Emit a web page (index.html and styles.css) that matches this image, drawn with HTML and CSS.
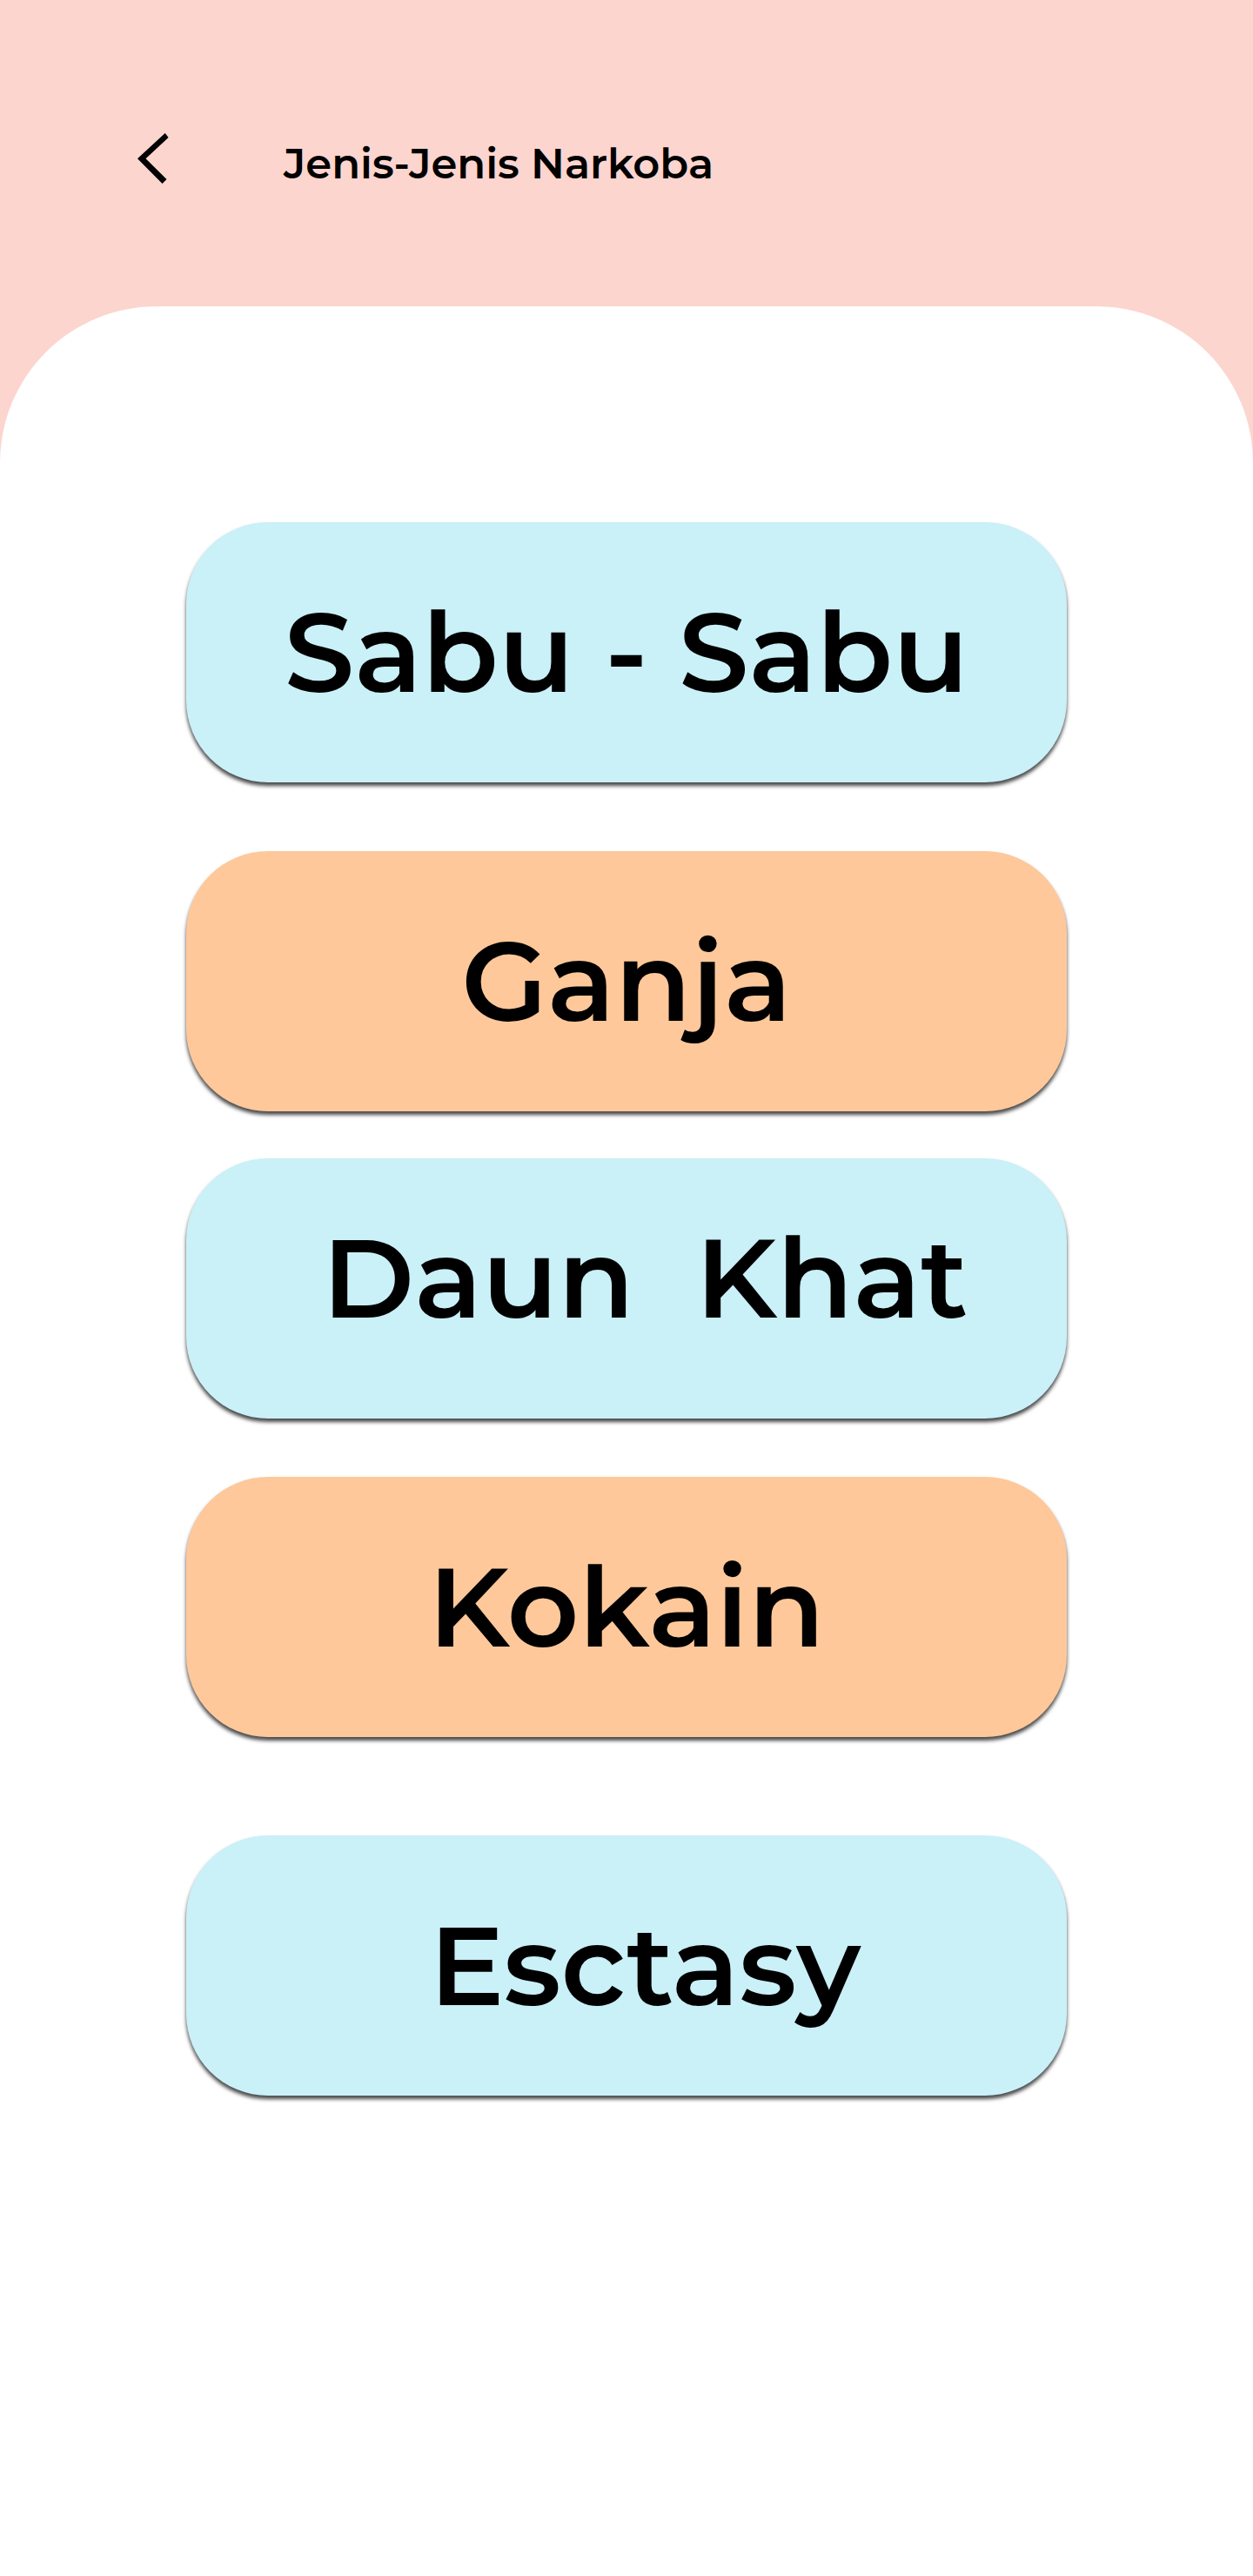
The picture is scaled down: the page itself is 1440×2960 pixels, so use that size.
FILE: index.html
```html
<!DOCTYPE html>
<html lang="id">
<head>
<meta charset="utf-8">
<meta name="viewport" content="width=device-width, initial-scale=1">
<title>Jenis-Jenis Narkoba</title>
<link rel="stylesheet" href="styles.css">
</head>
<body>
<header class="topbar">
  <a class="back" href="#" aria-label="Kembali">
    <svg class="back-icon" viewBox="0 0 36 58" width="36" height="58" aria-hidden="true"><path d="M0 29.300 31.700 0 35.600 5 9.500 29.200 33.500 53 28.500 58Z"/></svg>
  </a>
  <h1 class="title">Jenis-Jenis Narkoba</h1>
</header>
<main class="sheet">
  <nav class="menu">
    <button class="item blue" type="button">Sabu - Sabu</button>
    <button class="item orange ganja" type="button">Ganja</button>
    <button class="item blue khat" type="button">Daun&nbsp; Khat</button>
    <button class="item orange kokain" type="button">Kokain</button>
    <button class="item blue ecstasy" type="button">Esctasy</button>
  </nav>
</main>
</body>
</html>
```
FILE: styles.css
```css
* { box-sizing: border-box; }
body {
  margin: 0;
  min-height: 100vh;
  display: flex;
  flex-direction: column;
  background: #fcd5ce;
  color: #000;
  font-family: Montserrat, Inter, "Liberation Sans", sans-serif;
}
.topbar {
  display: flex;
  align-items: flex-start;
  gap: 132px;
  padding: 153px 158px 136px;
}
.back, .back-icon { display: block; }
.back-icon { fill: #000; }
.title {
  margin: 0;
  padding-top: 7px;
  font-size: 48px;
  line-height: 56px;
  font-weight: 600;
}
.sheet {
  flex: 1;
  background: #fff;
  border-radius: 180px 180px 0 0;
  padding: 248px 214px;
}
.menu { display: flex; flex-direction: column; }
.item {
  height: 299px;
  border: 0;
  border-radius: 94px;
  padding: 0 0 2px;
  font: inherit;
  font-size: 128px;
  font-weight: 600;
  color: #000;
  box-shadow: 0 4px 4px #000000b8;
}
.ganja { margin-top: 79px; }
.khat { margin-top: 54px; padding: 0 0 26px 43px; }
.kokain { margin-top: 67px; }
.ecstasy { margin-top: 113px; padding-left: 43px; }
.blue { background: #caf0f8; }
.orange { background: #fec89a; }
```
